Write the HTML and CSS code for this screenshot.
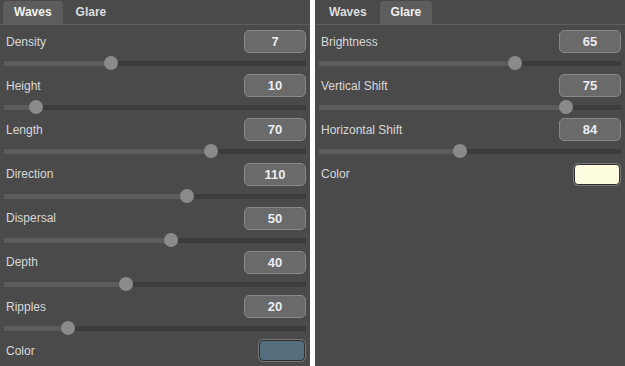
FILE: index.html
```html
<!DOCTYPE html>
<html lang="en">
<head>
    <meta charset="UTF-8">
    <title>Waves / Glare</title>
    <link rel="stylesheet" href="styles.css">
</head>
<body>

    <!-- Waves panel -->
    <div class="panel left">
        <div class="tabs">
            <span class="tab active">Waves</span>
            <span class="tab">Glare</span>
        </div>
        <div class="controls">
            <div class="control">
                <div class="head"><span class="label">Density</span><span class="num">7</span></div>
                <div class="slider"><div class="track"><div class="fill" style="width: 35.4%"></div><div class="knob" style="left: 35.4%"></div></div></div>
            </div>
            <div class="control">
                <div class="head"><span class="label">Height</span><span class="num">10</span></div>
                <div class="slider"><div class="track"><div class="fill" style="width: 10.6%"></div><div class="knob" style="left: 10.6%"></div></div></div>
            </div>
            <div class="control">
                <div class="head"><span class="label">Length</span><span class="num">70</span></div>
                <div class="slider"><div class="track"><div class="fill" style="width: 68.5%"></div><div class="knob" style="left: 68.5%"></div></div></div>
            </div>
            <div class="control">
                <div class="head"><span class="label">Direction</span><span class="num">110</span></div>
                <div class="slider"><div class="track"><div class="fill" style="width: 60.6%"></div><div class="knob" style="left: 60.6%"></div></div></div>
            </div>
            <div class="control">
                <div class="head"><span class="label">Dispersal</span><span class="num">50</span></div>
                <div class="slider"><div class="track"><div class="fill" style="width: 55.3%"></div><div class="knob" style="left: 55.3%"></div></div></div>
            </div>
            <div class="control">
                <div class="head"><span class="label">Depth</span><span class="num">40</span></div>
                <div class="slider"><div class="track"><div class="fill" style="width: 40.4%"></div><div class="knob" style="left: 40.4%"></div></div></div>
            </div>
            <div class="control">
                <div class="head"><span class="label">Ripples</span><span class="num">20</span></div>
                <div class="slider"><div class="track"><div class="fill" style="width: 21.2%"></div><div class="knob" style="left: 21.2%"></div></div></div>
            </div>
            <div class="head">
                <span class="label">Color</span><span class="swatch water"></span>
            </div>
        </div>
    </div>

    <!-- Glare panel -->
    <div class="panel right">
        <div class="tabs">
            <span class="tab">Waves</span>
            <span class="tab active">Glare</span>
        </div>
        <div class="controls">
            <div class="control">
                <div class="head"><span class="label">Brightness</span><span class="num">65</span></div>
                <div class="slider"><div class="track"><div class="fill" style="width: 64.9%"></div><div class="knob" style="left: 64.9%"></div></div></div>
            </div>
            <div class="control">
                <div class="head"><span class="label">Vertical Shift</span><span class="num">75</span></div>
                <div class="slider"><div class="track"><div class="fill" style="width: 81.8%"></div><div class="knob" style="left: 81.8%"></div></div></div>
            </div>
            <div class="control">
                <div class="head"><span class="label">Horizontal Shift</span><span class="num">84</span></div>
                <div class="slider"><div class="track"><div class="fill" style="width: 46.7%"></div><div class="knob" style="left: 46.7%"></div></div></div>
            </div>
            <div class="head">
                <span class="label">Color</span><span class="swatch light"></span>
            </div>
        </div>
    </div>

</body>
</html>
```

FILE: styles.css
```css
body {
    margin: 0;
    padding: 0;
    width: 625px;
    height: 366px;
    background-color: #fff; /* white strip between the panels */
    display: flex;
    gap: 5px;
    font-family: 'Liberation Sans', Arial, sans-serif;
    font-size: 12px;
    color: #dcdcdc;
    overflow: hidden;
}

.panel {
    background-color: #4a4a4a;
    height: 366px;
}

.left {
    width: 310px;
}

.right {
    flex: 1;
}

/* tabs */
.tabs {
    height: 25px;
    border-bottom: 1px solid #5e5e5e;
    display: flex;
    align-items: flex-end;
    gap: 2px;
    padding-left: 3px;
    box-sizing: border-box;
}

.tab {
    height: 23px;
    line-height: 22px;
    padding: 0 11px;
    font-weight: bold;
    font-size: 12px;
    color: #dedede;
    border-radius: 4px 4px 0 0;
}

.tab.active {
    background-color: #5d5d5d;
    color: #f2f2f2;
}

/* controls */
.controls {
    padding: 5px 4px 0 4px;
}

.head {
    height: 23px;
    display: flex;
    justify-content: space-between;
    align-items: center;
}

.label {
    padding-left: 2px;
    color: #d8d8d8;
}

.num {
    width: 60px;
    height: 21px;
    line-height: 21px;
    text-align: center;
    background-color: #6a6a6a;
    border: 1px solid #878787;
    border-radius: 5px;
    font-weight: bold;
    font-size: 13px;
    color: #ececf2;
}

.slider {
    height: 21.2px;
    display: flex;
    align-items: center;
}

.track {
    position: relative;
    width: 100%;
    height: 5px;
    background-color: #3c3c3c;
}

.fill {
    height: 5px;
    background-color: #5c5c5c;
}

.knob {
    position: absolute;
    top: -5px;
    width: 14px;
    height: 14px;
    margin-left: -7px;
    border-radius: 50%;
    background-color: #8a8a8a;
}

.swatch {
    width: 44px;
    height: 19px;
    border: 1px solid #2e2e2e;
    outline: 1px solid #7a7a7a;
    border-radius: 4px;
    margin-right: 1px;
}

.water {
    background-color: #546e7e;
}

.light {
    background-color: #fffde0;
}
```
